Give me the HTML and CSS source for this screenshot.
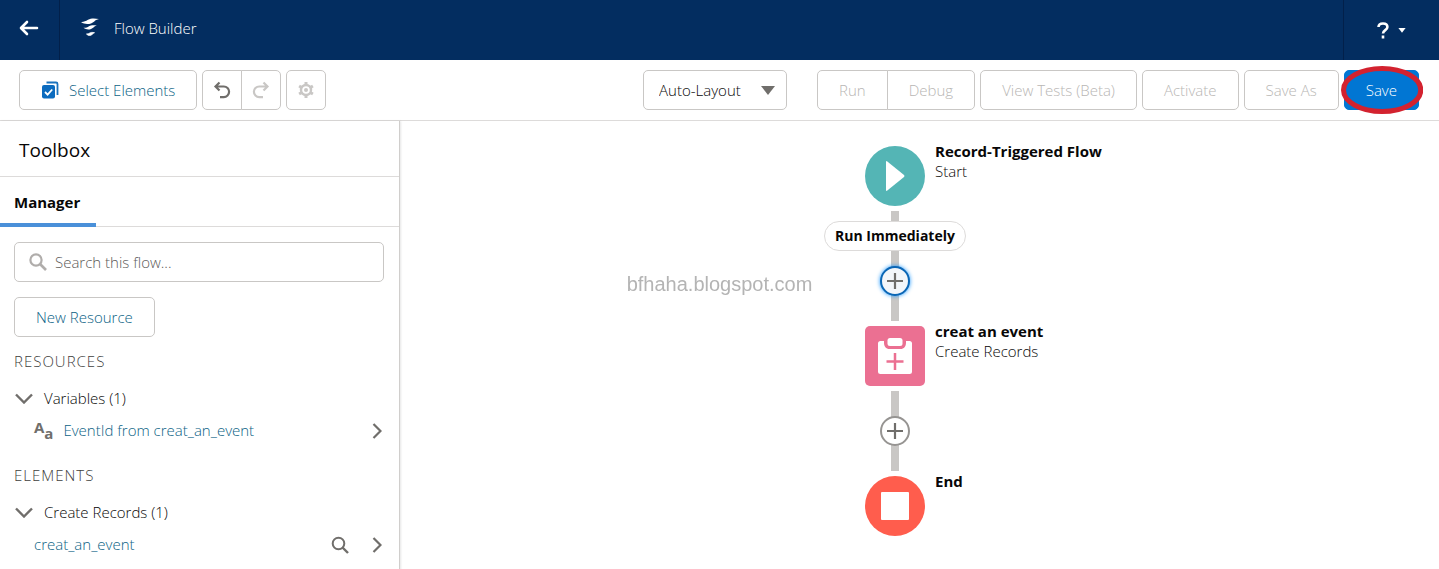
FILE: index.html
```html
<!DOCTYPE html>
<html lang="en">
<head>
<meta charset="utf-8">
<title>Flow Builder</title>
<link rel="stylesheet" href="styles.css">
</head>
<body>
<header class="topbar">
  <a class="topbar-back" href="#" aria-label="Back">
    <svg width="20" height="16" viewBox="0 0 20 16" fill="none" stroke="currentColor" stroke-width="2.6" stroke-linecap="round" stroke-linejoin="round"><path d="M18 8H2.200M8 2L2 8l6 6"/></svg>
  </a>
  <div class="brand">
    <svg width="20" height="20" viewBox="0 0 20 20" fill="currentColor"><path d="M1 4C3.500 4.300 5.500 3.200 8 1.800 11 .1 14.500.3 19 1c-2.500.4-3.400 1.300-4.700 2.400C11 6.200 5.500 7.200 1 4z"/><path d="M3.500 9.800c2.200.2 3.700-.5 5.500-1.600C11.200 6.900 13.500 7 17 7.500c-1.700.4-2.500 1-3.500 1.900-2.700 2.400-6.800 2.800-10 .4z"/><path d="M6.500 16c1.300.1 2.200-.3 3.300-1 1.400-.8 2.500-.7 4.700-.3-1.100.4-1.500.9-2.100 1.500-1.700 1.700-4.200 1.800-5.900-.2z" stroke="currentColor" stroke-width=".8"/></svg>
    <span class="brand-name">Flow Builder</span>
  </div>
  <button class="topbar-help" type="button" aria-label="Help">
    <svg width="12" height="17" viewBox="0 0 12 17" fill="none" stroke="currentColor" stroke-width="2.600"><path d="M1.500 5C1.600 2.600 3.400 1.500 6 1.500c2.700 0 4.400 1.300 4.400 3.500 0 3.200-4.400 3-4.400 6.500"/><path d="M6 13.500v3"/></svg>
    <svg width="8" height="5" viewBox="0 0 8 5" fill="currentColor"><path d="M.4 0h7.200L4 4.800z"/></svg>
  </button>
</header>

<div class="toolbar">
  <div class="toolbar-side">
    <button class="btn btn-select" type="button">
      <svg width="18" height="18" viewBox="0 0 18 18"><path d="M5.500 1.500H15A1.500 1.500 0 0 1 16.500 3v11" fill="none" stroke="#1b73bd" stroke-width="1.800"/><rect x="1" y="4" width="13" height="13.500" rx="2" fill="#0b6bbf"/><path d="M4 11l2.600 2.600L11.200 8.500" fill="none" stroke="#fff" stroke-width="1.800"/></svg>
      Select Elements
    </button>
    <div class="group">
      <button class="btn btn-icon" type="button" aria-label="Undo"><svg width="18" height="18" viewBox="0 0 18 18" fill="none" stroke="#706e6b" stroke-width="2.200"><path d="M6.500 1.500L2.500 5.500l4 4M3 5.500h7.800a5.300 5.300 0 0 1 0 10.600H7"/></svg></button>
      <button class="btn btn-icon" type="button" aria-label="Redo" disabled><svg width="18" height="18" viewBox="0 0 18 18" fill="none" stroke="#c9c7c5" stroke-width="2.200"><path d="M11.500 1.500l4 4-4 4M15 5.500H7.200a5.300 5.300 0 0 0 0 10.600H11"/></svg></button>
    </div>
    <button class="btn btn-icon" type="button" aria-label="Settings" disabled><svg width="18" height="18" viewBox="0 0 18 18" fill="none" stroke="#c9c7c5"><circle cx="9" cy="9" r="5" stroke-width="2.400"/><circle cx="9" cy="9" r="2" fill="#c9c7c5" stroke="none"/><path d="M9 1v3M9 14v3M2.100 5l2.600 1.500M13.300 11.500l2.600 1.500M2.100 13l2.600-1.500M13.300 6.500L15.900 5" stroke-width="3"/></svg></button>
  </div>
  <div class="toolbar-side">
    <div class="layout-pick">
      <select class="layout-select" aria-label="Layout"><option>Auto-Layout</option><option>Free-Form</option></select>
      <svg class="layout-arrow" width="14" height="9" viewBox="0 0 14 9"><path d="M0 0h14L7 9z" fill="#706e6b"/></svg>
    </div>
    <div class="group">
      <button class="btn" type="button" disabled>Run</button>
      <button class="btn" type="button" disabled>Debug</button>
    </div>
    <button class="btn" type="button" disabled>View Tests (Beta)</button>
    <button class="btn" type="button" disabled>Activate</button>
    <button class="btn" type="button" disabled>Save As</button>
    <div class="save">
      <button class="btn btn-brand" type="button">Save</button>
      <svg class="save-ring" viewBox="0 0 82 48" preserveAspectRatio="none" aria-hidden="true"><ellipse cx="41" cy="24" rx="38.500" ry="21.500" fill="none" stroke="#d3222f" stroke-width="5"/></svg>
    </div>
  </div>
</div>

<div class="workspace">
  <aside class="toolbox">
    <h1 class="toolbox-title">Toolbox</h1>
    <nav class="tabs"><a class="tab" href="#manager">Manager</a></nav>
    <div class="toolbox-body" id="manager">
      <label class="search">
        <svg width="18" height="18" viewBox="0 0 18 18" fill="none" stroke="#b0adab" stroke-width="2.200"><circle cx="7" cy="7" r="5.600"/><path d="M11 11l6 6" stroke-width="2.600"/></svg>
        <input class="search-input" type="text" placeholder="Search this flow..." aria-label="Search this flow">
      </label>
      <button class="btn btn-new" type="button">New Resource</button>

      <h2 class="section-title">RESOURCES</h2>
      <button class="twisty" type="button" aria-expanded="true">
        <svg width="18" height="11" viewBox="0 0 18 11" fill="none" stroke="#706e6b" stroke-width="2.400"><path d="M1 1.500l8 8 8-8"/></svg>
        Variables (1)
      </button>
      <div class="item">
        <span class="type-icon" aria-hidden="true"><b class="type-upper">A</b><b class="type-lower">a</b></span>
        <a class="item-link" href="#">EventId from creat_an_event</a>
        <button class="icon-btn" type="button" aria-label="Open variable"><svg width="10" height="16" viewBox="0 0 10 16" fill="none" stroke="#706e6b" stroke-width="2.200"><path d="M1.500 1l7 7-7 7"/></svg></button>
      </div>

      <h2 class="section-title">ELEMENTS</h2>
      <button class="twisty" type="button" aria-expanded="true">
        <svg width="18" height="11" viewBox="0 0 18 11" fill="none" stroke="#706e6b" stroke-width="2.400"><path d="M1 1.500l8 8 8-8"/></svg>
        Create Records (1)
      </button>
      <div class="item">
        <a class="item-link" href="#">creat_an_event</a>
        <button class="icon-btn" type="button" aria-label="Locate element"><svg width="18" height="18" viewBox="0 0 18 18" fill="none" stroke="#706e6b" stroke-width="2"><circle cx="7.500" cy="7.500" r="5.800"/><path d="M11.500 11.500l5.500 5.500" stroke-width="2.400"/></svg></button>
        <button class="icon-btn" type="button" aria-label="Open element"><svg width="10" height="16" viewBox="0 0 10 16" fill="none" stroke="#706e6b" stroke-width="2.200"><path d="M1.500 1l7 7-7 7"/></svg></button>
      </div>
    </div>
  </aside>

  <main class="canvas">
    <div class="flow">
      <div class="node">
        <svg width="60" height="60" viewBox="0 0 60 60"><circle cx="30" cy="30" r="30" fill="#54b5b5"/><path d="M21 16q0-1.500 1.300-.6L39 29q1 1 0 2L22.300 44.600Q21 45.500 21 44z" fill="#fff"/></svg>
        <div><strong class="node-name">Record-Triggered Flow</strong><span class="node-type">Start</span></div>
      </div>
      <div class="connector">
        <span class="path-label">Run Immediately</span>
        <button class="add add-focus" type="button" aria-label="Add element"><svg width="18" height="18" viewBox="0 0 18 18" stroke="#706e6b" stroke-width="2.200"><path d="M9 1v16M1 9h16"/></svg></button>
      </div>
      <div class="node">
        <svg width="60" height="60" viewBox="0 0 60 60"><rect width="60" height="60" rx="5" fill="#eb7092"/><path d="M15.500 15H19v1.500c0 4 2 6.500 5.500 6.500h11c3.500 0 5.500-2.500 5.500-6.500V15h3.500q2.500 0 2.500 2.500v28q0 2.500-2.500 2.500h-29Q13 48 13 45.500v-28q0-2.500 2.500-2.500z" fill="#fff"/><path d="M25 12h10q2.500 0 2.500 2.500v3q0 2.500-2.500 2.500H25q-2.500 0-2.500-2.500v-3Q22.500 12 25 12z" fill="#fff"/><path d="M30 27v17M21.500 35.500h17" stroke="#eb7092" stroke-width="2.500"/></svg>
        <div><strong class="node-name">creat an event</strong><span class="node-type">Create Records</span></div>
      </div>
      <div class="connector">
        <button class="add add-last" type="button" aria-label="Add element"><svg width="18" height="18" viewBox="0 0 18 18" stroke="#706e6b" stroke-width="2.200"><path d="M9 1v16M1 9h16"/></svg></button>
      </div>
      <div class="node">
        <svg width="60" height="60" viewBox="0 0 60 60"><circle cx="30" cy="30" r="30" fill="#ff5d4d"/><rect x="16" y="16" width="28" height="28" rx="1" fill="#fff"/></svg>
        <div><strong class="node-name">End</strong></div>
      </div>
    </div>
  </main>
</div>
<div class="watermark">bfhaha.blogspot.com</div>
</body>
</html>
```
FILE: styles.css
```css
* { box-sizing: border-box; }

body {
  margin: 0;
  min-height: 100vh;
  display: flex;
  flex-direction: column;
  background: #fff;
  color: #080707;
  font: 300 15px/20px "Open Sans", "Noto Sans", sans-serif;
}

button, input, select { font: inherit; color: inherit; }
a { color: #0b6285; text-decoration: none; }
svg { display: block; flex: none; }

.topbar {
  display: flex;
  height: 60px;
  background: #032d60;
  color: #fff;
}
.topbar-back {
  width: 60px;
  display: grid;
  place-items: center;
  padding: 0 2px 4px 0;
  border-right: 1px solid #02204a;
  color: #fff;
}
.brand {
  flex: 1;
  display: flex;
  align-items: center;
  gap: 14px;
  padding: 0 20px 4px;
}
.topbar-help {
  width: 96px;
  display: flex;
  align-items: center;
  justify-content: center;
  gap: 9px;
  padding: 0;
  border: 0;
  border-left: 1px solid #02204a;
  background: none;
}

.toolbar {
  display: flex;
  justify-content: space-between;
  padding: 10px 20px 10px 19px;
  border-bottom: 1px solid #dddbda;
}
.toolbar-side { display: flex; gap: 5px; }
.btn {
  display: flex;
  align-items: center;
  justify-content: center;
  height: 40px;
  padding: 0 21px;
  border: 1px solid #c9c7c5;
  border-radius: 5px;
  background: #fff;
  color: #0b6285;
  white-space: nowrap;
}
.btn:disabled { color: #b8b6b4; }
.btn-select { gap: 10px; }
.btn-icon { width: 40px; padding: 0; }
.btn-brand { border-color: #0176d3; background: #0176d3; color: #fff; }
.group { display: flex; }
.group .btn:first-child { border-radius: 5px 0 0 5px; }
.group .btn:last-child { margin-left: -1px; border-radius: 0 5px 5px 0; }
.layout-pick { position: relative; margin-right: 25px; }
.layout-select {
  appearance: none;
  width: 144px;
  height: 40px;
  padding: 0 30px 0 15px;
  border: 1px solid #c9c7c5;
  border-radius: 5px;
  background: #fff;
}
.layout-arrow { position: absolute; right: 12px; top: 16px; pointer-events: none; }
.save { position: relative; }
.save-ring { position: absolute; left: -3px; top: -4px; width: calc(100% + 7px); height: 48px; pointer-events: none; }

.workspace { flex: 1; display: flex; }
.toolbox {
  width: 400px;
  border-right: 1px solid #d0cecc;
  box-shadow: 1px 0 2px #0000001a;
}
.toolbox-title {
  margin: 0;
  padding: 17px 19px 14px;
  border-bottom: 1px solid #dddbda;
  font-size: 19px;
  font-weight: 400;
  line-height: 24px;
}
.tabs { display: flex; border-bottom: 1px solid #dddbda; }
.tab {
  margin-bottom: -1px;
  padding: 15px 16px 11px 14px;
  border-bottom: 4px solid #4a90d9;
  color: #080707;
  font-weight: 700;
}
.toolbox-body { padding: 15px 15px 0 14px; }
.search {
  display: flex;
  align-items: center;
  gap: 8px;
  height: 40px;
  padding: 0 14px;
  border: 1px solid #c9c7c5;
  border-radius: 5px;
}
.search-input { flex: 1; min-width: 0; padding: 0; border: 0; outline: 0; background: none; }
.search-input::placeholder { color: #5c5a58; opacity: 1; }
.btn-new { margin: 15px 0 14px; }
.section-title {
  margin: 0 0 17px;
  color: #3e3e3c;
  font-size: 15px;
  font-weight: 300;
  letter-spacing: 1px;
}
.twisty {
  display: flex;
  align-items: center;
  gap: 11px;
  margin: 0 0 10px;
  padding: 0 1px;
  border: 0;
  background: none;
}
.item { display: flex; align-items: center; gap: 10px; padding-left: 20px; height: 24px; margin-bottom: 23px; }
.item-link { flex: 1; }
.type-icon { display: flex; color: #706e6b; line-height: 16px; }
.type-upper, .type-lower { font-size: 15px; font-weight: 700; }
.type-lower { padding-top: 6px; }
.icon-btn { display: grid; place-items: center; width: 28px; height: 20px; padding: 2px 0 0; border: 0; background: none; }
.icon-btn:last-child { width: 14px; margin-left: 6px; }

.canvas { flex: 1; padding: 25px 0 33px; }
.flow { width: 109px; margin: 0 auto; display: flex; flex-direction: column; gap: 5px; }
.node { display: flex; gap: 10px; white-space: nowrap; }
.node-name, .node-type { display: block; }
.node-name { margin-top: -5px; font-weight: 700; }
.connector {
  width: 60px;
  display: flex;
  flex-direction: column;
  align-items: center;
  gap: 15px;
  padding: 10px 0 25px;
  background: linear-gradient(#c9c7c5, #c9c7c5) center / 8px 100% no-repeat;
}
.path-label {
  height: 30px;
  padding: 0 10px;
  border: 1px solid #dddbda;
  border-radius: 15px;
  background: #fff;
  font-size: 14px;
  font-weight: 700;
  line-height: 28px;
  white-space: nowrap;
}
.add {
  display: grid;
  place-items: center;
  width: 30px;
  height: 30px;
  padding: 0;
  border: 2px solid #969492;
  border-radius: 50%;
  background: #fff;
}
.add-last { margin-top: 15px; }
.add-focus { border-color: #0b66b5; background: #f3f6fa; box-shadow: 0 0 4px #1b96ff; }

.watermark {
  position: fixed;
  inset: 0;
  display: grid;
  place-items: center;
  color: #b4b4b4;
  font: 20px "Liberation Sans", Arial, sans-serif;
  pointer-events: none;
}
```
